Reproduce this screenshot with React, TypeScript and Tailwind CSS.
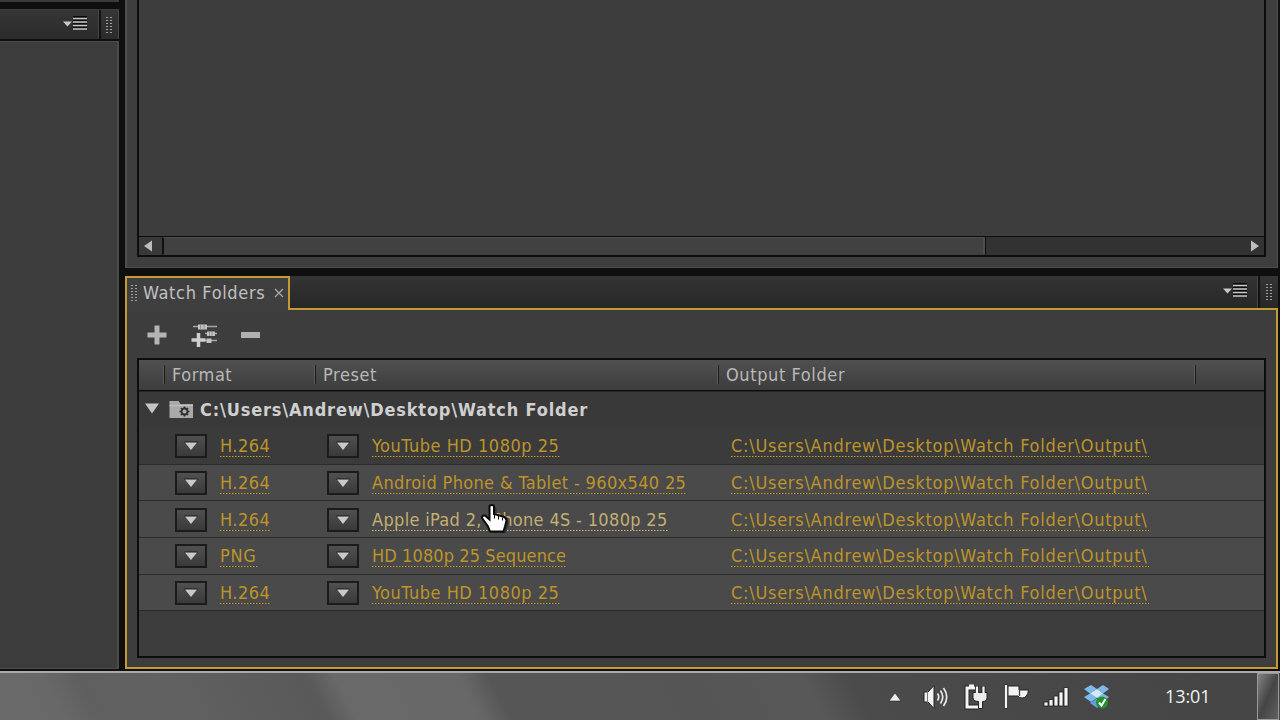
import React from 'react';

const rows = [
  { format: 'H.264', fw: 'w-[51px] tracking-[0.500px]', preset: 'YouTube HD 1080p 25', pw: 'w-[188px] tracking-[0.520px]', dark: true },
  { format: 'H.264', fw: 'w-[51px] tracking-[0.500px]', preset: 'Android Phone & Tablet - 960x540 25', pw: 'w-[315px] tracking-[0.350px]' },
  { format: 'H.264', fw: 'w-[51px] tracking-[0.500px]', preset: 'Apple iPad 2, iPhone 4S - 1080p 25', pw: 'w-[296px] tracking-[0.330px]', hover: true },
  { format: 'PNG', fw: 'w-[38px] tracking-[0.700px]', preset: 'HD 1080p 25 Sequence', pw: 'w-[195px] tracking-[0.100px]' },
  { format: 'H.264', fw: 'w-[51px] tracking-[0.500px]', preset: 'YouTube HD 1080p 25', pw: 'w-[188px] tracking-[0.520px]' },
];

const outputPath = 'C:\\Users\\Andrew\\Desktop\\Watch Folder\\Output\\';

const Grip = () => (
  <div className="grid grid-cols-2 gap-[2px]">
    {Array.from({ length: 12 }).map((_, i) => (
      <span key={i} className="h-[1px] w-[2px] bg-[#a0a0a0]" />
    ))}
  </div>
);

const PanelMenu = () => (
  <svg width="26" height="16" viewBox="0 0 26 16" className="-mt-[2px] shrink-0">
    <path d="M1 5.500h9L5.500 10.500z" fill="#c8c8c8" />
    <path d="M11 1h14M11 4.500h14M11 8h14M11 11.500h14" stroke="#0c0c0c" strokeWidth="2" />
    <path d="M11 2.500h14M11 6h14M11 9.500h14M11 13h14" stroke="#c8c8c8" strokeWidth="1.600" />
  </svg>
);

const DropButton = () => (
  <div className="flex h-[24px] w-[32px] shrink-0 items-center justify-center border-2 border-[#1b1b1b] bg-linear-to-b from-[#505050] to-[#3a3a3a]">
    <svg width="14" height="10" viewBox="0 0 14 10">
      <path d="M0.500 0.500h13v1.500h-13z" fill="#1a1a1a" />
      <path d="M1 1.500h12L7 9z" fill="#c9c9c9" />
    </svg>
  </div>
);

const DottedLink = ({ text, width, hover = false }: { text: string; width: string; hover?: boolean }) => (
  <div className={`${width} shrink-0 whitespace-nowrap ${hover ? 'text-[#c3af72]' : 'text-[#bd942b]'}`}>
    <div className="h-[21px] leading-[22px]">{text}</div>
    <div
      className={
        hover
          ? 'h-[1px] bg-[repeating-linear-gradient(90deg,#d0bc80_0_1px,#8a7d58_1px_2px,#4a4640_2px_3px)]'
          : 'h-[1px] bg-[repeating-linear-gradient(90deg,#c99d2c_0_1px,#84692c_1px_2px,#473f30_2px_3px)]'
      }
    />
  </div>
);

const HeaderMark = () => (
  <div className="h-[19px] w-[2px] shrink-0 border-l border-[#5a5a5a] bg-[#1c1c1c]" />
);

const LeftPanel = () => (
  <div className="flex w-[119px] shrink-0 flex-col">
    <div className="h-[2px] bg-[#3a3a3a]" />
    <div className="h-[7px] bg-[#0f0f0f]" />
    <div className="flex h-[30px] border-t border-[#3c3c3c] bg-linear-to-b from-[#363636] to-[#2b2b2b]">
      <div className="flex w-[99px] items-center justify-end border-r border-[#444] pr-[10px]">
        <PanelMenu />
      </div>
      <div className="flex flex-1 items-center justify-center border-r border-l-2 border-l-[#111] border-r-[#4a4a4a] pr-[2px]">
        <Grip />
      </div>
    </div>
    <div className="h-[2px] bg-[#0f0f0f]" />
    <div className="flex-1 border-t border-r-2 border-b border-[#4b4b4b] bg-[#3c3c3c]" />
  </div>
);

const QueuePanel = () => (
  <div className="flex h-[268px] border-r border-b border-l-2 border-[#4e4e4e] bg-[#3e3e3e] pr-[11px] pb-[10px] pl-[10px]">
    <div className="flex flex-1 flex-col border-x-2 border-b-2 border-[#0e0e0e]">
      <div className="flex-1 bg-[#3d3d3d]" />
      <div className="flex h-[19px] border-t border-[#0e0e0e] bg-[#323232]">
        <div className="flex w-[23px] items-center justify-center bg-[#393939] pr-[5px]">
          <svg width="10" height="12" viewBox="0 0 10 12">
            <path d="M9 0.500v11L1 6z" fill="#bdbdbd" />
          </svg>
        </div>
        <div className="w-[823px] border border-r-2 border-l-2 border-[#4e4e4e] border-b-[#3c3c3c] border-l-[#101010] bg-[#414141] shadow-[1px_0_0_#0e0e0e]" />
        <div className="flex flex-1 items-center justify-end pr-[4px]">
          <svg width="10" height="12" viewBox="0 0 10 12">
            <path d="M1 0.500v11L9 6z" fill="#bdbdbd" />
          </svg>
        </div>
      </div>
    </div>
  </div>
);

const Toolbar = () => (
  <div className="flex h-[48px] items-center pt-[2px]">
    <svg width="22" height="22" viewBox="0 0 22 22" className="ml-[9px]">
      <path d="M11 1.500v19M1.500 11h19" stroke="#b5b5b5" strokeWidth="5" />
    </svg>
    <svg width="28" height="26" viewBox="0 0 28 26" className="ml-[22px]">
      <path d="M3 4.500h24M15 11.500h12M15 18.500h12" stroke="#a8a8a8" strokeWidth="1.500" />
      <path d="M8 2.500h9v5H8zM17 9.500h8v4.500h-8zM16.500 16.500h5v4.500h-5z" fill="#c4c4c4" />
      <path d="M10.500 2.500v5M14 2.500v5M19.500 9.500v4.500M22 9.500v4.500" stroke="#8c8c8c" strokeWidth="1" />
      <path d="M8.500 11v14M1.500 18h14" stroke="#cfcfcf" strokeWidth="3.500" />
    </svg>
    <div className="ml-[23px] h-[6px] w-[19px] bg-[#b0b0b0]" />
  </div>
);

const WatchFolders = () => (
  <div className="flex flex-1 flex-col">
    <div className="flex h-[34px]">
      <div className="relative z-10 flex h-[34px] w-[165px] shrink-0 items-center border-2 border-b-0 border-[#c39a35] bg-[#403f40] pb-[3px] pl-[4px]">
        <Grip />
        <span className="ml-[6px] w-[123px] text-[18px] tracking-[0.650px] whitespace-nowrap text-[#c0c0c0]">Watch Folders</span>
        <svg width="10" height="10" viewBox="0 0 10 10" className="ml-[8px]">
          <path d="M1 1l8 8M9 1l-8 8" stroke="#aaa" strokeWidth="1.200" />
        </svg>
      </div>
      <div className="flex flex-1 border-b-2 border-[#c39a35] bg-linear-to-b from-[#343434] to-[#272727]">
        <div className="flex flex-1 items-center justify-end border-r border-[#464646] pr-[9px]">
          <PanelMenu />
        </div>
        <div className="flex w-[20px] items-center justify-center border-l-2 border-[#111]">
          <Grip />
        </div>
      </div>
    </div>
    <div className="flex flex-1 flex-col border-2 border-t-0 border-[#c39a35] bg-[#3e3d3e] pr-[10px] pb-[9px] pl-[10px]">
      <Toolbar />
      <div className="flex flex-1 flex-col border-2 border-[#0d0d0d] bg-[#3c3c3c]">
        <div className="flex h-[31px] shrink-0 items-center border-b border-[#0d0d0d] bg-linear-to-b from-[#505050] to-[#3d3d3d] pb-[1px] text-[18px] text-[#b8b8b8]">
          <div className="w-[24px]" />
          <HeaderMark />
          <span className="-mt-[1px] w-[149px] pl-[7px] tracking-[0.550px]">Format</span>
          <HeaderMark />
          <span className="-mt-[1px] w-[401px] pl-[7px] tracking-[0.600px]">Preset</span>
          <HeaderMark />
          <span className="-mt-[1px] w-[475px] pl-[7px] tracking-[0.600px]">Output Folder</span>
          <HeaderMark />
        </div>
        <div className="flex h-[37px] shrink-0 items-center border-t border-[#262626] bg-[#393939] pb-[2px]">
          <svg width="14" height="11" viewBox="0 0 14 11" className="ml-[6px] -mt-[2px]">
            <path d="M0 0.500h14L7 10.500z" fill="#c4c4c4" />
          </svg>
          <svg width="24" height="19" viewBox="0 0 24 19" className="ml-[10px]">
            <path d="M0.500 1h9l2 3H24v14H0.500z" fill="#a9a9a9" />
            <path d="M0.500 5.500H24" stroke="#c2c2c2" />
            <circle cx="15.500" cy="11.500" r="3" fill="none" stroke="#303030" strokeWidth="1.800" />
            <path d="M15.500 6.500v2M15.500 14.500v2M10.500 11.500h2M18.500 11.500h2M12 8l1.400 1.400M17.600 13.600L19 15M19 8l-1.400 1.400M13.400 13.600L12 15" stroke="#303030" strokeWidth="1.700" />
          </svg>
          <span className="ml-[7px] text-[18px] font-bold tracking-[0.820px] whitespace-nowrap text-[#cfcfcf]">C:\Users\Andrew\Desktop\Watch Folder</span>
        </div>
        {rows.map((row, i) => (
          <div
            key={i}
            className={`flex h-[36.700px] shrink-0 items-center border-b border-[#2b2b2b] pt-[1px] pl-[36px] text-[18px] ${row.dark ? 'bg-[#3b3b3b]' : 'bg-[#4a4a4a]'}`}
          >
            <DropButton />
            <div className="ml-[13px] w-[107px] shrink-0">
              <DottedLink text={row.format} width={row.fw} />
            </div>
            <DropButton />
            <div className="ml-[13px] w-[359px] shrink-0">
              <DottedLink text={row.preset} width={row.pw} hover={row.hover} />
            </div>
            <DottedLink text={outputPath} width="w-[418px] tracking-[0.730px]" />
          </div>
        ))}
      </div>
    </div>
  </div>
);

const Taskbar = () => (
  <div className="flex h-[49px] items-center border-t-2 border-[#aaa9a5] bg-[linear-gradient(63deg,#6a6a6a_0px,#686868_58px,#5f5f5f_90px,#616161_160px,#5c5c5c_240px,#595959_292px,#696969_318px,#686868_428px,#565656_456px,#555_640px,#585858_735px,#4b4b4b_775px,#454545_1110px)]">
    <div className="flex flex-1 items-center">
      <svg width="14" height="10" viewBox="0 0 14 10" className="ml-[888px]">
        <path d="M1 9h12L7 1z" fill="#eee" stroke="#222" strokeWidth="0.600" />
      </svg>
      <svg width="27" height="26" viewBox="0 0 27 26" className="ml-[20px]">
        <path d="M2 8h4l6-6.500v23L6 18H2z" fill="#f2f2f2" stroke="#222" />
        <path d="M5.500 7v12" stroke="#777" />
        <path d="M15.500 9.500q2.500 3.500 0 7M18.500 6.500q4.500 6.500 0 13M21.500 4q6.500 9 0 18" fill="none" stroke="#e8e8e8" strokeWidth="1.700" />
      </svg>
      <svg width="26" height="28" viewBox="0 0 26 28" className="ml-[14px]">
        <path d="M12 5H4v19h11" fill="none" stroke="#222" strokeWidth="5" />
        <path d="M12 5H4v19h11" fill="none" stroke="#f4f4f4" strokeWidth="3" />
        <path d="M6 1.500h5v3H6z" fill="#f4f4f4" />
        <path d="M10 9.500h14v5q0 4-4.500 4v7h-4v-7q-5.500 0-5.500-4z" fill="#eee" stroke="#222" />
        <path d="M14 3v6M20.500 3v6" stroke="#222" strokeWidth="4" />
        <path d="M14 3.500v6.500M20.500 3.500v6.500" stroke="#f4f4f4" strokeWidth="2.300" />
      </svg>
      <svg width="27" height="27" viewBox="0 0 27 27" className="ml-[14px]">
        <path d="M3 1.500v24" stroke="#222" strokeWidth="4" />
        <path d="M5 3h11v4h9.500q-1 8-6.500 8-3.500 0-4-2H5z" fill="#f3f3f3" stroke="#222" />
        <path d="M3 2v23" stroke="#f4f4f4" strokeWidth="2.400" />
        <path d="M16.500 6v7" stroke="#444" strokeWidth="1.300" />
      </svg>
      <svg width="26" height="22" viewBox="0 0 26 22" className="ml-[13px]">
        <path d="M1 16h4v4H1zM6 13.500h4V20H6zM11 10h4v10h-4zM16 6h4v14h-4zM21 1.500h4V20h-4z" fill="#f4f4f4" stroke="#1c1c1c" strokeWidth="0.800" />
      </svg>
      <svg width="28" height="26" viewBox="0 0 28 26" className="ml-[14px]">
        <path d="M8 1l6 4-7 4.500-6-4.500zM20 1l6 4-6 4.500L14 5zM1 13l6-3.500 7 4.500-6 4zM20 9.500l6 3.500-6 5-6-4z" fill="#7fb8ea" />
        <path d="M14 5l6 4.500-6 4.500-7-4.500z" fill="#d3e9fa" />
        <path d="M7 19l7-4.500 6 4.500-6 5z" fill="#5f9fdc" />
        <circle cx="19" cy="18.500" r="6" fill="#21932d" />
        <path d="M16 18.500l2.500 3 4-6.500" fill="none" stroke="#fff" strokeWidth="2" />
      </svg>
    </div>
    <div className="mr-[45px] w-[47px] font-['Open_Sans','Noto_Sans',sans-serif] text-[18px] tracking-[-0.100px] text-[#f0f0f0]">13:01</div>
    <div className="-mt-[1px] h-[47px] w-[22px] border border-[#9a9a9a] bg-linear-to-br from-[#858585] via-[#454545] to-[#606060]" />
    <div className="w-[1px]" />
  </div>
);

const App = () => {
  return (
    <div className="relative flex h-[720px] w-[1280px] flex-col overflow-hidden bg-[#0f0f0f] font-['DejaVu_Sans_Condensed','DejaVu_Sans',sans-serif]">
      <div className="flex h-[669px]">
        <LeftPanel />
        <div className="ml-[6px] flex w-[1153px] shrink-0 flex-col">
          <QueuePanel />
          <div className="h-[8px]" />
          <WatchFolders />
        </div>
      </div>
      <div className="h-[2px]" />
      <Taskbar />
      {/* hand pointer over the preset column */}
      <svg width="32" height="34" viewBox="0 0 32 34" className="absolute top-[503px] left-[480px]">
        <path
          d="M12 5q2.500-2 4.500 0v8l9 3q3 1 3 4l-1.500 5-1 5H12.500l-2-4.500L4 17q0-3 3-2.500l5 4z"
          fill="#1a1a1a"
          opacity="0.500"
        />
        <path
          d="M9.500 3q2.500-2 4.500 0v8l9 2.500q3.500 1 3.500 4l-1.500 6-1.500 5H10l-2-5L2 15q0-3 3-2.500l4.500 4z"
          fill="#fff"
          stroke="#0a0a0a"
          strokeWidth="2"
        />
        <path d="M14.500 12v3.500M18.500 13v3.500M22.500 14.500v3" stroke="#0a0a0a" strokeWidth="1.100" />
      </svg>
    </div>
  );
};

export default App;
